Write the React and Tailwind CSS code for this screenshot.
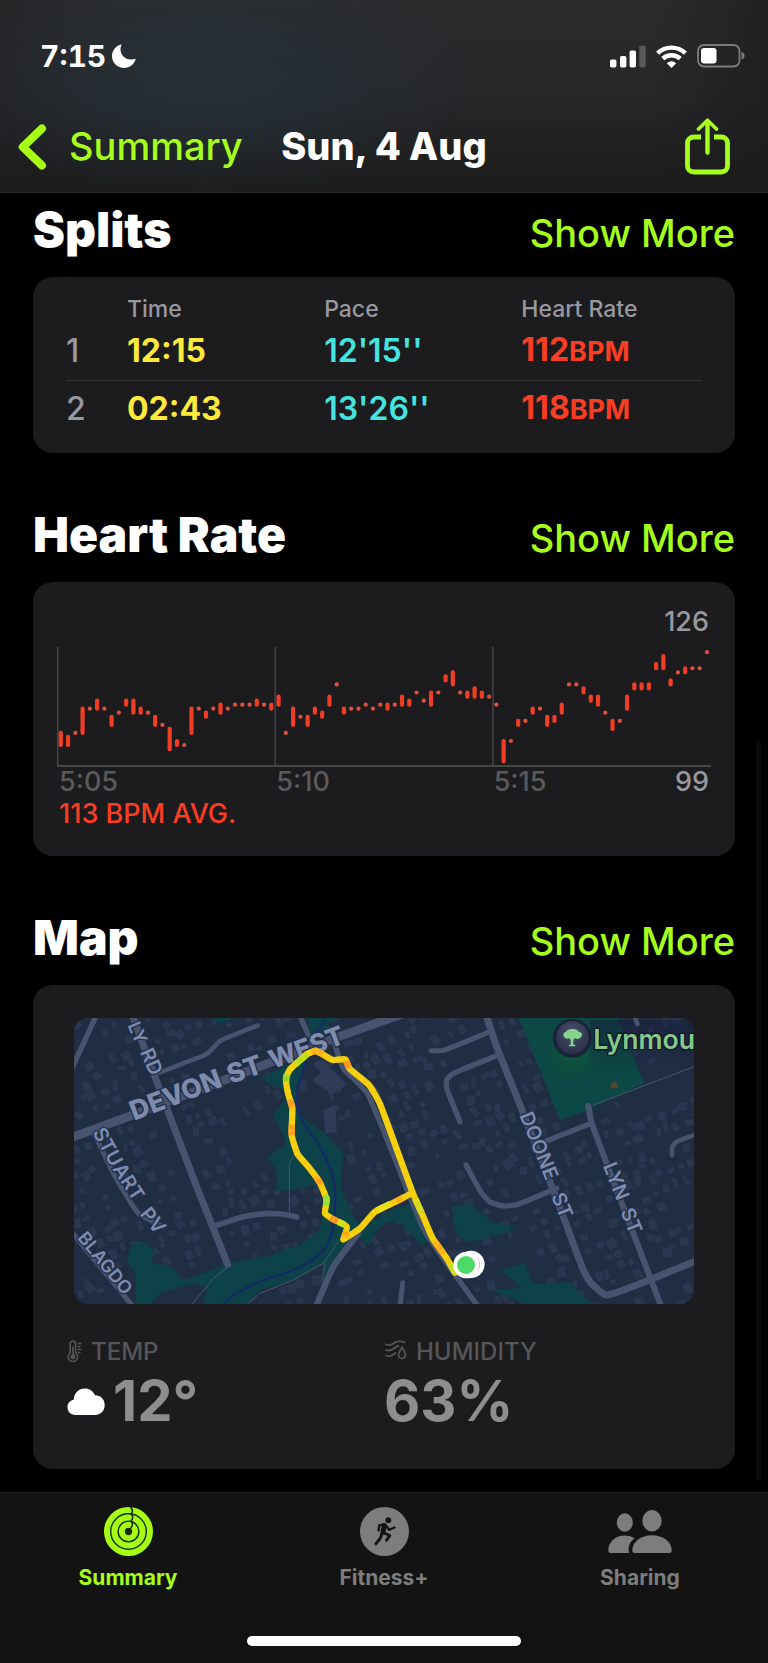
import React from "react";

const HEART_RATE = [
  [103, 106], [103, 105], [106, 106], [106, 112], [112, 112], [112, 114], [112, 112], [108, 110], [111, 111], [113, 114],
  [111, 114], [111, 112], [111, 111], [108, 110], [108, 108], [102, 107], [103, 104], [103, 103], [106, 112], [112, 112],
  [110, 111], [112, 112], [111, 113], [112, 112], [113, 113], [113, 113], [113, 113], [113, 114], [113, 113], [112, 113],
  [113, 115], [106, 106], [108, 112], [110, 110], [108, 110], [111, 112], [110, 111], [113, 115], [118, 118], [111, 112],
  [112, 112], [112, 112], [113, 113], [112, 112], [113, 113], [112, 113], [113, 113], [113, 115], [113, 114], [116, 116],
  [114, 114], [113, 116], [116, 116], [119, 120], [118, 121], [116, 116], [115, 116], [115, 117], [115, 116], [115, 115],
  [113, 113], [99, 104], [104, 104], [108, 109], [109, 109], [111, 112], [112, 112], [108, 110], [109, 110], [111, 113],
  [118, 118], [118, 118], [116, 117], [114, 115], [113, 115], [111, 111], [107, 109], [109, 109], [112, 115], [117, 118],
  [117, 118], [117, 118], [122, 123], [122, 125], [118, 119], [121, 121], [121, 122], [122, 122], [122, 122], [126, 126],
];

const SPLITS = [
  { n: 1, time: "12:15", pace: "12'15''", bpm: 112 },
  { n: 2, time: "02:43", pace: "13'26''", bpm: 118 },
];

/* Roads: stroke width followed by a list of points. */
const ROADS = [
  { w: 26, p: [[30, 414], [205, 350], [520, 230], [850, 105], [1020, 45]] },
  { w: 16, p: [[110, 44], [36, 205]] },
  { w: 21, p: [[215, 40], [285, 230], [330, 350], [410, 560], [503, 793]] },
  { w: 14, p: [[300, 217], [370, 190], [440, 162], [482, 122], [593, 76]] },
  { w: 17, p: [[470, 676], [550, 650], [620, 641], [665, 642], [710, 651]] },
  { w: 15, p: [[100, 395], [160, 520], [235, 640], [310, 680]] },
  { w: 15, p: [[30, 690], [120, 800], [220, 920]] },
  { w: 16, p: [[718, 44], [745, 105]] },
  { w: 16, p: [[820, 120], [850, 205], [922, 280], [1050, 590], [1092, 690], [1160, 790], [1255, 920]] },
  { w: 19, p: [[895, 700], [820, 800], [768, 920]] },
  { w: 15, p: [[1028, 848], [1020, 920]] },
  { w: 21, p: [[1278, 44], [1310, 140], [1390, 340], [1510, 650], [1570, 810], [1592, 848], [1640, 885], [1780, 835], [1910, 782]] },
  { w: 15, p: [[1113, 152], [1150, 151], [1290, 95]] },
  { w: 16, p: [[1315, 165], [1180, 220], [1160, 240], [1160, 265], [1200, 365]] },
  { w: 16, p: [[1218, 495], [1262, 575], [1290, 606], [1330, 618], [1370, 614], [1490, 565]] },
  { w: 18, p: [[1585, 318], [1595, 370], [1720, 700], [1804, 920]] },
  { w: 16, p: [[1450, 427], [1590, 371]] },
  { w: 14, p: [[1910, 402], [1850, 425], [1837, 440], [1836, 465]] },
  { w: 14, p: [[1722, 44], [1732, 72]] },
];

/* The walked loop, in two parts that meet at the sharp southern corner. */
const ROUTE = [
  [
    [1185, 818], [1160, 775], [1118, 715], [1090, 650], [1058, 578], [960, 312], [928, 256], [868, 205], [856, 178], [818, 180],
    [768, 153], [740, 163], [690, 208], [678, 235], [684, 280], [697, 325], [695, 405], [713, 463], [745, 500], [778, 545],
    [800, 600], [795, 640], [820, 658], [860, 680], [850, 718],
  ],
  [[850, 718], [900, 685], [945, 635], [1005, 606], [1058, 578]],
];

const ROUTE_TINTS = [
  { c: "#ffb01a", p: [[756, 156], [768, 153], [790, 163]] },
  { c: "#ff9420", p: [[857, 182], [868, 205]] },
  { c: "#b9dc1e", p: [[706, 194], [740, 164]] },
  { c: "#93d52a", p: [[679, 222], [679, 245]] },
  { c: "#ff9a22", p: [[690, 297], [697, 325]] },
  { c: "#ff9a22", p: [[695, 375], [695, 405]] },
  { c: "#ffa01c", p: [[768, 530], [784, 556]] },
  { c: "#8fe03a", p: [[800, 588], [798, 615]] },
  { c: "#ff8a2a", p: [[812, 654], [832, 664]] },
  { c: "#c3e026", p: [[836, 666], [854, 674]] },
  { c: "#ffa01c", p: [[859, 695], [852, 712]] },
  { c: "#e9e017", p: [[950, 632], [990, 612]] },
  { c: "#ffb010", p: [[1005, 606], [1030, 593]] },
  { c: "#ffa81a", p: [[1125, 725], [1150, 760]] },
  { c: "#d3dc1c", p: [[1085, 640], [1066, 597]] },
  { c: "#c9df22", p: [[1170, 792], [1185, 818]] },
];

const line = (points) => "M" + points.map((q) => q.join(",")).join("L");

/* Cubic curve through every point. */
function smooth(points, tightness = 6) {
  let d = "M" + points[0].join(",");
  for (let i = 0; i < points.length - 1; i++) {
    const p0 = points[i - 1] || points[i];
    const p1 = points[i];
    const p2 = points[i + 1];
    const p3 = points[i + 2] || p2;
    const k = Math.hypot(p2[0] - p1[0], p2[1] - p1[1]) / tightness;
    const a = Math.hypot(p2[0] - p0[0], p2[1] - p0[1]) || 1;
    const b = Math.hypot(p3[0] - p1[0], p3[1] - p1[1]) || 1;
    const c1 = [p1[0] + ((p2[0] - p0[0]) / a) * k, p1[1] + ((p2[1] - p0[1]) / a) * k];
    const c2 = [p2[0] - ((p3[0] - p1[0]) / b) * k, p2[1] - ((p3[1] - p1[1]) / b) * k];
    d += `C${c1.join(",")} ${c2.join(",")} ${p2.join(",")}`;
  }
  return d;
}

const ROUTE_PATH = ROUTE.map((part) => smooth(part)).join("");

function distanceToSegment(x, y, [ax, ay], [bx, by]) {
  const dx = bx - ax;
  const dy = by - ay;
  const t = Math.max(0, Math.min(1, ((x - ax) * dx + (y - ay) * dy) / (dx * dx + dy * dy)));
  return Math.hypot(x - ax - t * dx, y - ay - t * dy);
}

/* Lays out houses on a slanted grid, leaving the roads clear. */
function buildingsPath() {
  let seed = 7;
  const rnd = () => {
    seed = (seed * 16807) % 2147483647;
    return seed / 2147483647;
  };
  const base = -0.37;
  let d = "";
  for (let v = -200; v < 1700; v += 42) {
    for (let u = -400; u < 2000; u += 35) {
      const x = u * Math.cos(base) - v * Math.sin(base) + (rnd() - 0.5) * 22;
      const y = u * Math.sin(base) + v * Math.cos(base) + (rnd() - 0.5) * 22;
      const w = 6 + rnd() * 8;
      const h = 7 + rnd() * 9;
      const a = base + (rnd() - 0.5) * 0.7;
      const skip = rnd() < 0.25;
      if (skip || x < 20 || x > 1930 || y < 30 || y > 930) continue;
      let near = 999;
      for (const r of ROADS) {
        for (let i = 1; i < r.p.length; i++) {
          near = Math.min(near, distanceToSegment(x, y, r.p[i - 1], r.p[i]));
        }
      }
      if (near < 28 || near > 120) continue;
      const corners = [[-w, -h], [w, -h], [w, h], [-w, h]].map(([p, q]) => [
        Math.round(x + p * Math.cos(a) - q * Math.sin(a)),
        Math.round(y + p * Math.sin(a) + q * Math.cos(a)),
      ]);
      d += line(corners) + "Z";
    }
  }
  return d;
}

const BUILDINGS = buildingsPath();

function MapLabel({ x, y, angle, size = 59, weight = 600, children }) {
  return (
    <text
      transform={`translate(${x} ${y}) rotate(${angle})`}
      fontSize={size}
      fontWeight={weight}
      fill="#7e8bad"
      stroke="#222f4b"
      strokeWidth="8"
      strokeLinejoin="round"
      paintOrder="stroke"
    >
      {children}
    </text>
  );
}

function RouteMap() {
  return (
    <svg viewBox="42 54 1860 858" className="block w-full rounded-[14px] bg-[#202e44]" role="img" aria-label="Route map">
      <defs>
        <radialGradient id="poi" cx="50%" cy="35%" r="65%">
          <stop offset="0" stopColor="#4a4f6b" />
          <stop offset="1" stopColor="#2b2f49" />
        </radialGradient>
        <radialGradient id="glow">
          <stop offset="0" stopColor="#0f5a35" stopOpacity="0.8" />
          <stop offset="1" stopColor="#0f5a35" stopOpacity="0" />
        </radialGradient>
        <linearGradient id="shade" x1="0" y1="0" x2="0" y2="1">
          <stop offset="0" stopColor="#161b3a" stopOpacity="0.85" />
          <stop offset="1" stopColor="#161b3a" stopOpacity="0" />
        </linearGradient>
      </defs>
      <path d={BUILDINGS} fill="#2a3751" />
      <path d="M755 240l30 -22 55 45 -22 22zM790 330l35 -14 6 80 -35 6zM760 190l25 -12 75 75 -25 22z" fill="#303b58" />
      <g fill="#0c4248">
        <path d="M640 345L690 280L600 235L680 195L735 190L705 270L715 345L790 395L850 460L842 560L880 650L905 690L870 740L820 800L785 850L795 790L700 840L600 870L560 914L430 914L442 860L400 850L300 880L270 914L225 914L228 820L200 780L215 735L250 725L282 750L275 790L330 800L370 840L430 820L500 790L610 772L720 735L780 690L792 600L770 556L650 575L650 510L620 470L680 430Z" />
        <path d="M745 50H830L765 115L745 105Z" />
        <path d="M450 50H525L480 70Z" />
        <path d="M890 705L925 737L950 690L985 662L1020 665L1050 700L1080 732L1110 725L1060 610L1005 625L950 655Z" />
        <path d="M1178 620L1225 613L1260 635L1300 668L1368 680L1330 702L1280 712L1226 728L1195 705L1180 670Z" />
        <path d="M1320 812L1395 788L1420 852L1530 846L1560 885L1610 914H1400L1290 868L1390 865Z" />
      </g>
      <path d="M1375 50L1500 360L1582 331L1752 250L1672 50Z" fill="#0c4845" />
      <circle cx="1537" cy="160" r="85" fill="url(#glow)" />
      <path d="M1650 252l18 -8 6 16 -18 8z" fill="#5b4636" />
      <rect x="1590" y="60" width="320" height="155" fill="url(#shade)" opacity="0.6" />
      <g fill="none" stroke="#4a5670" strokeWidth="3">
        <path d="M705 460L688 490V640M505 800L460 835L395 914M835 725L790 790L700 840L600 880L560 914M795 790L785 845" />
        <path d="M1910 197L1600 315" />
      </g>
      <path
        d="M795 58C760 110 745 140 735 190C722 240 705 270 712 320C725 380 760 400 785 450C810 500 825 530 826 590C826 660 820 710 790 752C740 800 690 818 620 836C560 860 520 880 488 914"
        fill="none"
        stroke="#132b66"
        strokeWidth="7"
      />
      <g fill="none" stroke="#47536f" strokeLinecap="round" strokeLinejoin="round">
        {ROADS.map((r, i) => (
          <path key={i} d={smooth(r.p)} strokeWidth={r.w} />
        ))}
      </g>
      <g fontFamily="Inter, sans-serif">
        <MapLabel x={222} y={362} angle={-21} size={80} weight={800}>DEVON</MapLabel>
        <MapLabel x={512} y={252} angle={-19} size={80} weight={800}>ST</MapLabel>
        <MapLabel x={638} y={208} angle={-20} size={78} weight={800}>WEST</MapLabel>
        <MapLabel x={202} y={76} angle={66} size={54}>LY</MapLabel>
        <MapLabel x={239} y={156} angle={66}>RD</MapLabel>
        <MapLabel x={97} y={397} angle={62}>STU</MapLabel>
        <MapLabel x={156} y={506} angle={57}>ART</MapLabel>
        <MapLabel x={238} y={642} angle={52}>PV</MapLabel>
        <MapLabel x={50} y={714} angle={51} size={54}>BLAGDO</MapLabel>
        <MapLabel x={1378} y={346} angle={68}>DOONE</MapLabel>
        <MapLabel x={1473} y={588} angle={68}>ST</MapLabel>
        <MapLabel x={1628} y={497} angle={68}>LYN</MapLabel>
        <MapLabel x={1681} y={634} angle={68}>ST</MapLabel>
        <text x="1600" y="146" fontSize="80" fontWeight="600" fill="#86c78a" stroke="#131a2c" strokeWidth="9" strokeLinejoin="round" paintOrder="stroke">
          Lynmou
        </text>
      </g>
      <circle cx="1537" cy="115" r="58" fill="#1a2138" />
      <circle cx="1537" cy="113" r="49" fill="url(#poi)" />
      <g fill="#84d58b">
        <path d="M1513 112c-6-7-2-16 5-16c2-10 34-14 39 0c10 0 12 11 5 16c-5 6-14 6-18 2l-4 6v16h-8v-16l-5-6c-5 4-10 2-14-2z" />
        <rect x="1527" y="134" width="19" height="5" rx="2" />
      </g>
      <g fill="none" strokeLinejoin="round" strokeWidth="19">
        <path d={ROUTE_PATH} stroke="#f3cd0b" strokeLinecap="round" />
        {ROUTE_TINTS.map((t, i) => (
          <path key={i} d={line(t.p)} stroke={t.c} />
        ))}
        <path d={ROUTE_PATH} stroke="#ffe21a" strokeWidth="17" strokeDasharray="10 14" opacity="0.3" />
      </g>
      <circle cx="1233" cy="793" r="41" fill="#fff" />
      <circle cx="1220" cy="795" r="40" fill="#fff" />
      <path d="M1252 769a38 38 0 0 1 0 48a58 58 0 0 0 0 -48z" fill="#f3b3b0" />
      <circle cx="1218" cy="795" r="27" fill="#4cd964" />
    </svg>
  );
}

function HeartRateChart() {
  const x = (i) => 60.7 + i * 7.26;
  const y = (bpm) => 652 + (126 - bpm) * 4.04;
  return (
    <svg viewBox="57 638 654 130" className="block w-full" role="img" aria-label="Heart rate over time">
      <g stroke="#47474a" strokeWidth="1.4">
        <path d="M57.7 647V766M275.2 647V766M493 647V766" />
        <path d="M57 766H711" strokeWidth="1.8" />
      </g>
      {HEART_RATE.map(([lo, hi], i) => (
        <rect
          key={i}
          x={x(i) - 2}
          y={y(hi) - 2}
          width="4.2"
          height={y(lo) - y(hi) + 4.2}
          rx="2"
          fill={lo === hi ? "#e0503c" : "#f03e25"}
        />
      ))}
    </svg>
  );
}

function SectionHeading({ title }) {
  return (
    <div className="mb-[23px] flex h-12 items-baseline justify-between leading-[48px]">
      <h2 className="text-[48px] font-black text-white">{title}</h2>
      <a href="#" className="text-[38px] font-medium text-[#a6ff1b]">Show More</a>
    </div>
  );
}

function StatusBar() {
  return (
    <div className="flex h-8 items-center justify-between pr-[23px] pl-10 text-white">
      <div className="flex items-center gap-1.5">
        <span className="text-[30px] leading-8 font-bold tabular-nums">7:15</span>
        <svg viewBox="0 0 24 24" className="size-6" fill="currentColor" aria-hidden="true">
          <path d="M9.6 0.3C8.9 1.9 8.500 3.500 8.500 5.300C8.500 11.200 13 15.600 18.800 15.600C20.500 15.600 22.300 15.200 23.700 14.600C22.600 20.200 17.800 24 12.200 24C5.500 24 0 18.600 0 12C0 6.400 4.100 1.600 9.600 0.300Z" />
        </svg>
      </div>
      <div className="flex items-center gap-[10px]">
        <svg viewBox="0 0 36 23" className="h-[23px] w-9" fill="currentColor" aria-hidden="true">
          <rect x="0" y="14.500" width="6.400" height="8" rx="1.800" />
          <rect x="10" y="11" width="6.400" height="11.500" rx="1.800" />
          <rect x="19.600" y="5.500" width="6.400" height="17" rx="1.800" />
          <rect x="29.300" y="0.500" width="6.400" height="22" rx="1.800" fill="#59595b" />
        </svg>
        <svg viewBox="0 0 31 23" className="h-[23px] w-[31px]" aria-hidden="true">
          <g fill="none" stroke="currentColor" strokeWidth="4.400">
            <path d="M1.600 8.200A20 20 0 0 1 29.400 8.200" />
            <path d="M6.800 13.700A12.500 12.500 0 0 1 24.200 13.700" />
          </g>
          <path d="M10.800 18.200A6.800 6.800 0 0 1 20.200 18.200L15.500 23Z" fill="currentColor" />
        </svg>
        <svg viewBox="0 0 48 24" className="h-6 w-12" aria-hidden="true">
          <rect x="1" y="1" width="41.500" height="21.500" rx="6" fill="none" stroke="#7c7c7e" strokeWidth="1.800" />
          <rect x="4" y="4" width="15.500" height="15.500" rx="3" fill="currentColor" />
          <path d="M44.500 8C46.500 8.600 47.600 10 47.600 11.800S46.500 15 44.500 15.600Z" fill="#7c7c7e" />
        </svg>
      </div>
    </div>
  );
}

function RingsIcon() {
  return (
    <svg viewBox="0 0 49 49" className="size-[49px]" aria-hidden="true">
      <circle cx="24.500" cy="24.500" r="24.500" fill="#a6ff12" />
      <g fill="none" stroke="#142b06" strokeWidth="1.400">
        <circle cx="24.500" cy="24.500" r="17.800" />
        <circle cx="24.500" cy="24.500" r="10.400" />
        <path d="M26 0C29 1.500 29 5 27 7C29.200 8.500 29.200 12 27 14.300C29.200 16 28.800 19.500 26 22" strokeWidth="1.600" />
      </g>
      <circle cx="24.500" cy="24.500" r="3.700" fill="#142b06" />
    </svg>
  );
}

function RunnerIcon() {
  return (
    <svg viewBox="0 0 49 49" className="size-[49px]" aria-hidden="true">
      <circle cx="24.500" cy="24.500" r="24.500" fill="#7d7d7d" />
      <circle cx="28.300" cy="13.200" r="2.900" fill="#131313" />
      <g fill="none" stroke="#131313" strokeLinecap="round" strokeLinejoin="round">
        <path d="M24.300 18.500L23 25.300" strokeWidth="5" />
        <path d="M23.500 17.400L19.300 18.300L18.600 23.300" strokeWidth="2.400" />
        <path d="M26 18.500L29 22.800L34.500 20.500" strokeWidth="2.400" />
        <path d="M24 26L29.800 28.600L26.500 33.200" strokeWidth="2.900" />
        <path d="M21.700 27L20.500 31L15.800 36.800" strokeWidth="2.900" />
      </g>
    </svg>
  );
}

function PeopleIcon() {
  return (
    <svg viewBox="0 0 64 49" className="h-[49px] w-16" fill="#7d7d7d" aria-hidden="true">
      <ellipse cx="16.800" cy="15.500" rx="8" ry="9.200" />
      <path d="M3 46C1 46 0.300 44.800 0.300 43C0.500 34.500 8 28.500 16.800 28.500C21 28.500 24 29.600 26.500 31.300C22.500 34.300 20.500 38 20.600 43C20.600 44 20.700 45 21.200 46Z" />
      <ellipse cx="44" cy="13.700" rx="9.600" ry="10.700" />
      <path d="M27 46C25 46 24.300 44.800 24.300 43C24.500 34.700 33 28.300 44 28.300S63.500 34.700 63.700 43C63.700 44.800 63 46 61 46Z" />
    </svg>
  );
}

function TabItem({ icon, label, active }) {
  return (
    <button
      type="button"
      className={active ? "flex flex-col items-center gap-2 text-[#a6ff1b]" : "flex flex-col items-center gap-2 text-[#7d7d7d]"}
    >
      {icon}
      <span className="text-[21px] leading-7 font-bold">{label}</span>
    </button>
  );
}

export default function App() {
  return (
    <div className="relative flex min-h-screen flex-col bg-black font-['Inter',sans-serif]">
      <header className="border-b border-[#2a2a2b] bg-[radial-gradient(ellipse_260px_120px_at_210px_80px,#243038,transparent),linear-gradient(to_right,#1d1d1f66,transparent_15%,transparent_85%,#1b1b1d99),linear-gradient(to_bottom,#2b2b2d,#27272a_50%,#1b1b1b)] pt-10 pb-[18px]">
        <StatusBar />
        <nav className="mt-[46px] grid h-14 grid-cols-[1fr_auto_1fr] items-center px-[18px] text-[38px] text-[#a6ff1b]">
          <button type="button" className="flex items-center gap-[22px] font-medium">
            <svg viewBox="0 0 29 46" className="h-[46px] w-[29px]" fill="none" stroke="#a6ff12" strokeWidth="8" strokeLinecap="round" strokeLinejoin="round" aria-hidden="true">
              <path d="M24 4.500L4.800 23L24 41.500" />
            </svg>
            Summary
          </button>
          <h1 className="font-extrabold text-white">Sun, 4 Aug</h1>
          <button type="button" aria-label="Share" className="mr-5 justify-self-end">
            <svg viewBox="0 0 45 57" className="h-[57px] w-[45px]" fill="none" stroke="currentColor" aria-hidden="true">
              <path d="M16 19H9C5 19 2.500 21.500 2.500 25V48C2.500 51.500 5 54 9 54H36C40 54 42.500 51.500 42.500 48V25C42.500 21.500 40 19 36 19H29" strokeWidth="4.800" />
              <path d="M22.500 34.500V4" strokeWidth="4.400" strokeLinecap="round" />
              <path d="M13.500 11L22.500 2.200L31.500 11" strokeWidth="3.600" strokeLinecap="round" strokeLinejoin="round" />
            </svg>
          </button>
        </nav>
      </header>

      <main className="flex flex-1 flex-col gap-[58px] px-[33px] pt-[13px] pb-[23px]">
        <section>
          <SectionHeading title="Splits" />
          <div className="rounded-[20px] bg-[#1c1c1e] px-[33px] pt-[17px] pb-4">
            <table className="w-full table-fixed border-collapse text-left">
              <thead>
                <tr className="h-[29px] text-[23px] leading-7 text-[#98989f]">
                  <th className="w-[61px]" aria-label="Split" />
                  <th className="w-[31%] font-medium">Time</th>
                  <th className="w-[31%] font-medium">Pace</th>
                  <th className="font-medium">Heart Rate</th>
                </tr>
              </thead>
              <tbody className="divide-y divide-[#363639]">
                {SPLITS.map((s) => (
                  <tr key={s.n} className="h-[57px] text-[32px] leading-10 font-bold">
                    <td className="font-medium text-[#98989f]">{s.n}</td>
                    <td className="text-[#ffe93b]">{s.time}</td>
                    <td className="font-semibold text-[#45e4df]">{s.pace}</td>
                    <td className="text-[#fb3d24]">
                      {s.bpm}
                      <span className="text-[27px]">BPM</span>
                    </td>
                  </tr>
                ))}
              </tbody>
            </table>
          </div>
        </section>

        <section>
          <SectionHeading title="Heart Rate" />
          <div className="rounded-[20px] bg-[#1c1c1e] p-6 text-[27px] font-medium">
            <p className="pr-0.5 text-right leading-8 text-[#98989f]">126</p>
            <HeartRateChart />
            <div className="grid grid-cols-3 pl-0.5 leading-7 text-[#5a5a5d]">
              <span>5:05</span>
              <span>5:10</span>
              <span className="flex justify-between pr-0.5">
                5:15 <span className="text-[#98989f]">99</span>
              </span>
            </div>
            <p className="pl-0.5 leading-9 text-[#fb3d24]">113 BPM AVG.</p>
          </div>
        </section>

        <section>
          <SectionHeading title="Map" />
          <div className="rounded-[20px] bg-[#1c1c1e] pt-[33px] pb-[35px]">
            <div className="px-[41px]">
              <RouteMap />
            </div>
            <dl className="mt-8 grid grid-cols-2 px-[34px]">
              <div>
                <dt className="flex items-center gap-2 text-[24px] leading-8 font-medium text-[#565659]">
                  <svg viewBox="0 0 16 24" className="h-6 w-4" fill="none" stroke="currentColor" strokeWidth="1.600" strokeLinecap="round" aria-hidden="true">
                    <path d="M3.200 12.800V4A2.600 2.600 0 0 1 8.600 4V12.800A4.800 4.800 0 1 1 3.200 12.800Z" />
                    <path d="M5.900 7V15" />
                    <circle cx="5.900" cy="16.800" r="1.700" fill="currentColor" />
                    <path d="M11.300 3.500H14M11.300 6.500H13M11.300 9.500H14M11.300 12.500H13" strokeWidth="1.300" />
                  </svg>
                  TEMP
                </dt>
                <dd className="flex items-center gap-2 text-[56px] leading-[66px] font-bold text-[#8e8e91]">
                  <svg viewBox="0 0 38 27" className="h-[27px] w-[38px]" fill="#fff" role="img" aria-label="Cloudy">
                    <path d="M8.500 27C3.700 27 0.500 23.700 0.500 19.300C0.500 15.400 3 12.500 6.700 11.800C7 5.200 11.600 0.500 17.800 0.500C22.400 0.500 26.200 3 28 7.300C33.700 7.300 37.700 11.500 37.700 17C37.700 22.700 33.600 27 28 27Z" />
                  </svg>
                  12°
                </dd>
              </div>
              <div>
                <dt className="flex items-center gap-2 text-[24px] leading-8 font-medium text-[#565659]">
                  <svg viewBox="0 0 24 24" className="size-6" fill="none" stroke="currentColor" strokeWidth="1.700" strokeLinecap="round" aria-hidden="true">
                    <path d="M2 4.500C6 6.500 8.500 4 11 2.500C14 0.800 17 0.800 20.500 2.500" />
                    <path d="M2 10C6 12 8.500 9.500 11 7.500C12.300 6.500 13.300 6 14.500 5.800" />
                    <path d="M2 15.500C5.500 17.500 8.500 15.500 11.500 13" />
                    <path d="M18 7.500C16.500 10 14.500 12.500 14.500 15A3.500 3.500 0 0 0 21.500 15C21.500 12.500 19.500 10 18 7.500Z" />
                  </svg>
                  HUMIDITY
                </dt>
                <dd className="text-[56px] leading-[66px] font-bold text-[#8e8e91]">63%</dd>
              </div>
            </dl>
          </div>
        </section>
      </main>

      <footer className="border-t border-[#222223] bg-[#131313] pt-[14px]">
        <nav className="grid grid-cols-3">
          <TabItem icon={<RingsIcon />} label="Summary" active />
          <TabItem icon={<RunnerIcon />} label="Fitness+" />
          <TabItem icon={<PeopleIcon />} label="Sharing" />
        </nav>
        <div className="mx-auto mt-[44px] mb-[17px] h-[10px] w-[274px] rounded-full bg-white" />
      </footer>

      <div className="absolute top-[740px] right-[7px] h-[740px] w-[5px] rounded-full bg-[#0b0b0b]" />
    </div>
  );
}
